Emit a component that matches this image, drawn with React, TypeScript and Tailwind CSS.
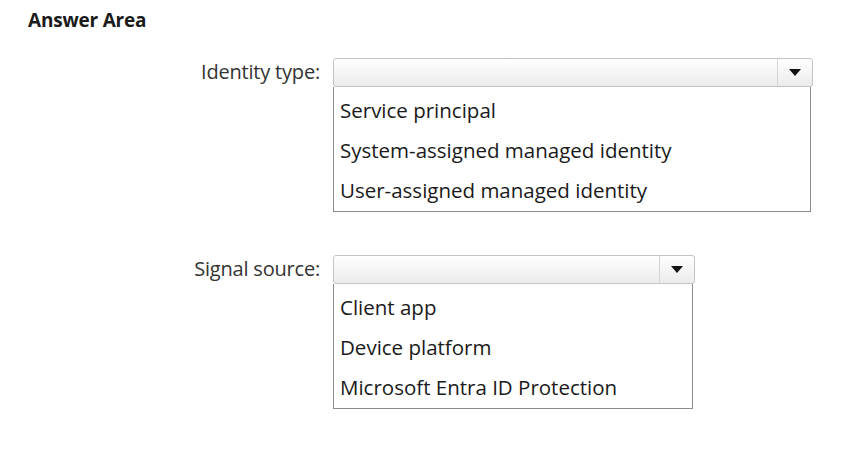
interface DropdownProps {
  label: string;
  options: string[];
  width: string;
}

function Caret() {
  return (
    <svg width="12" height="8" viewBox="0 0 12 8" className="block">
      <path d="M0 0 L12 0 L6 7 Z" fill="#111" />
    </svg>
  );
}

function Dropdown({ label, options, width }: DropdownProps) {
  return (
    <div className="flex items-start">
      <div className="w-[305px] pt-[3px] pr-[13px] text-right text-[20px] leading-[22px] tracking-[-0.2px] text-[#333]">
        {label}
      </div>
      <div className={width}>
        <div className="flex h-[29px] rounded-[3px] border border-[#c4c4c4] bg-gradient-to-b from-white to-[#ebebeb]">
          <div className="flex-1" />
          <div className="flex w-[35px] items-center justify-center border-l border-[#d4d4d4]">
            <Caret />
          </div>
        </div>
        <div className="mr-[2px] border-x border-b border-x-[#8c8c8c] border-b-[#8c8c8c] pt-[3px] pb-[1px]">
          {options.map((o) => (
            <div key={o} className="flex h-[40px] items-center px-[6px] text-[20.5px] text-[#1a1a1a]">
              {o}
            </div>
          ))}
        </div>
      </div>
    </div>
  );
}

export default function App() {
  return (
    <div
      className="h-[455px] w-[855px] bg-white pl-[28px] pt-[9px]"
      style={{ fontFamily: '"Open Sans", "Noto Sans", sans-serif' }}
    >
      <div className="text-[19px] font-bold leading-[22px] tracking-[-0.2px] text-[#1a1a1a]">Answer Area</div>
      <div className="mt-[27px]">
        <Dropdown
          label="Identity type:"
          width="w-[480px]"
          options={['Service principal', 'System-assigned managed identity', 'User-assigned managed identity']}
        />
      </div>
      <div className="mt-[43px]">
        <Dropdown
          label="Signal source:"
          width="w-[362px]"
          options={['Client app', 'Device platform', 'Microsoft Entra ID Protection']}
        />
      </div>
    </div>
  );
}
